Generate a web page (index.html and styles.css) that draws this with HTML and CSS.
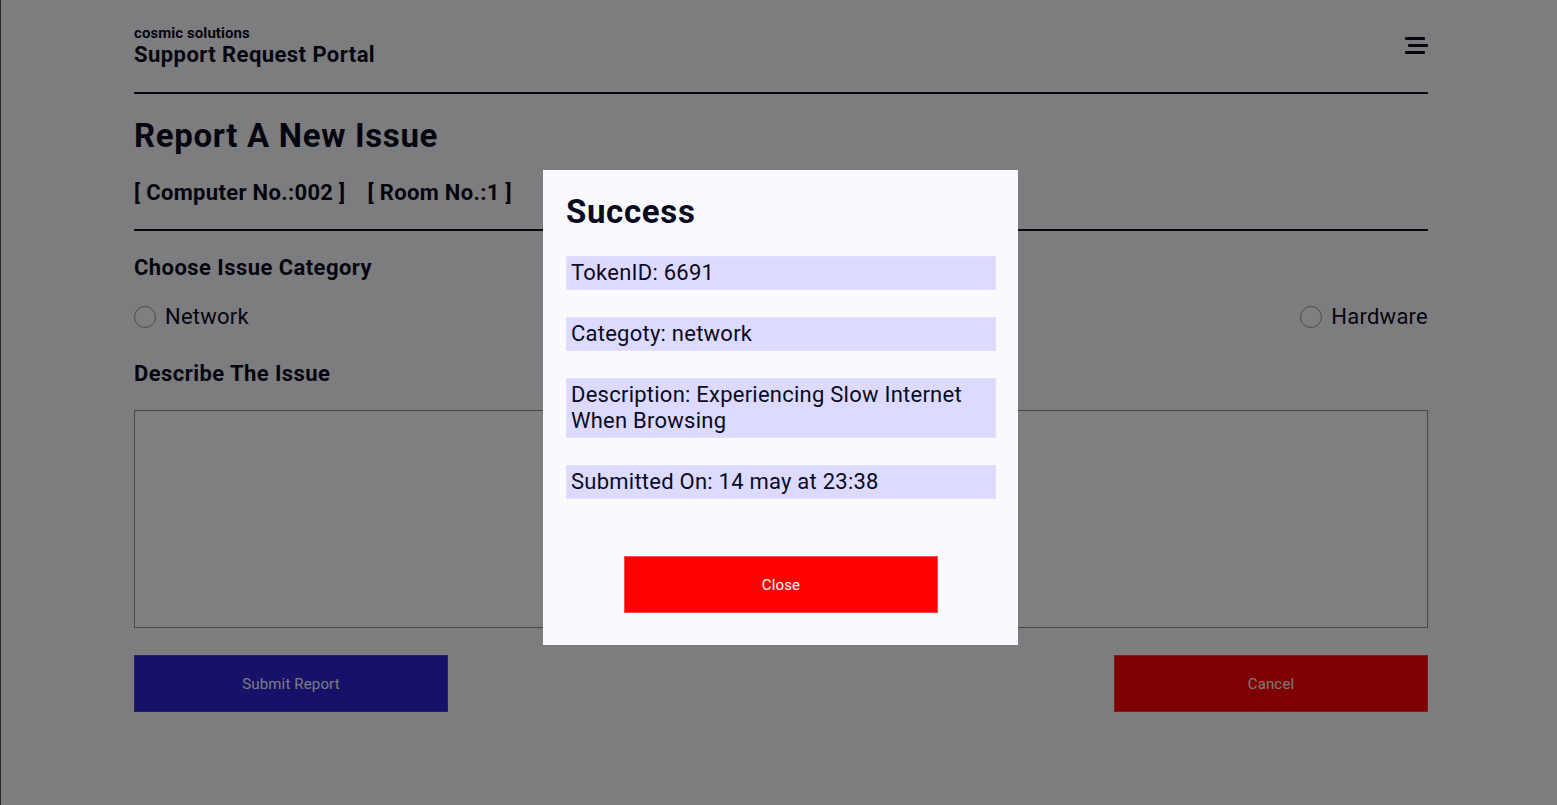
FILE: index.html
```html
<!DOCTYPE html>
<html lang="en">
<head>
<meta charset="utf-8">
<title>Support Request Portal</title>
<link rel="stylesheet" href="styles.css">
</head>
<body>
<div class="page">
  <header class="header">
    <div class="brand">
      <div class="company">cosmic solutions</div>
      <div class="portal">Support Request Portal</div>
    </div>
    <div class="menu" aria-label="menu">
      <span class="bar"></span>
      <span class="bar mid"></span>
      <span class="bar"></span>
    </div>
  </header>
  <hr class="rule">
  <h1 class="title">Report A New Issue</h1>
  <div class="meta"><span>[ Computer No.:002 ]</span><span>[ Room No.:1 ]</span></div>
  <hr class="rule">
  <h2 class="label">Choose Issue Category</h2>
  <div class="radios">
    <label class="radio"><span class="circle"></span>Network</label>
    <label class="radio"><span class="circle"></span>Hardware</label>
  </div>
  <h2 class="label describe">Describe The Issue</h2>
  <div class="textarea"></div>
  <div class="actions">
    <button class="btn submit">Submit Report</button>
    <button class="btn cancel">Cancel</button>
  </div>
</div>
<div class="overlay">
  <div class="modal">
    <h2 class="modal-title">Success</h2>
    <div class="info">TokenID: 6691</div>
    <div class="info">Categoty: network</div>
    <div class="info">Description: Experiencing Slow Internet When Browsing</div>
    <div class="info">Submitted On: 14 may at 23:38</div>
    <div class="modal-actions"><button class="btn close">Close</button></div>
  </div>
</div>
</body>
</html>
```

FILE: styles.css
```css
* { box-sizing: border-box; }
html, body { margin: 0; padding: 0; }
body {
  background: #fafafe;
  color: #0a0a1e;
  font-family: Roboto, "Liberation Sans", sans-serif;
  letter-spacing: 0.015em;
  border-left: 1px solid #555;
  min-height: 805px;
}
.page {
  width: 1294px;
  margin-left: 133px;
  padding-top: 25px;
}
.header {
  display: flex;
  justify-content: space-between;
  align-items: center;
}
.company { font-size: 15px; font-weight: 700; line-height: 16px; letter-spacing: 0.005em; }
.portal { font-size: 22px; font-weight: 700; line-height: 26px; margin-top: 1px; letter-spacing: 0.02em; }
.menu { width: 23px; display: flex; flex-direction: column; gap: 4px; margin-top: -3px; }
.bar { display: block; width: 20px; height: 3px; background: #0a0a1e; border-radius: 1px; }
.bar.mid { margin-left: 3px; }
.rule { border: 0; border-top: 2px solid #0a0a1e; margin: 24px 0 0; }
.title { font-size: 33px; font-weight: 700; line-height: 38px; margin: 23px 0 0; letter-spacing: 0.02em; }
.meta { font-size: 22px; font-weight: 700; line-height: 25px; margin: 25px 0 23px; display: flex; gap: 22px; letter-spacing: 0.015em; }
.meta + .rule { margin-top: 24px; }
.label { font-size: 22px; font-weight: 700; line-height: 25px; margin: 24px 0 0; letter-spacing: 0.02em; }
.radios { display: flex; justify-content: space-between; margin-top: 24px; }
.radio { display: flex; align-items: center; gap: 9px; font-size: 22px; line-height: 25px; }
.circle { width: 22px; height: 22px; border: 1.5px solid #979797; border-radius: 50%; background: #fff; }
.describe { margin-top: 32px; }
.textarea { height: 218px; border: 1px solid #8e8e8e; background: #fff; margin-top: 24px; }
.actions { display: flex; justify-content: space-between; margin-top: 27px; }
.btn {
  font-family: Roboto, "Liberation Sans", sans-serif;
  font-size: 15px;
  letter-spacing: 0.01em;
  width: 314px;
  height: 57px;
  border: 1px solid transparent;
  color: #f6f6ff;
  cursor: pointer;
}
.submit { background: #2f23d5; border-color: #4a40d8; }
.cancel { background: #ff0000; border-color: #ff3a3a; }
.overlay {
  position: fixed;
  inset: 0;
  background: rgba(0, 0, 0, 0.5);
  display: flex;
  justify-content: center;
  align-items: center;
  padding: 10px 0 0 4px;
}
.modal {
  width: 475px;
  height: 475px;
  background: #fafafe;
  padding: 23px 22px 32px 23px;
  display: flex;
  flex-direction: column;
}
.modal-title { font-size: 33px; font-weight: 700; line-height: 38px; margin: 0 0 25px 0; letter-spacing: 0.02em; }
.info {
  background: #dcdaff;
  border: 1px solid #e2e0ff;
  font-size: 22px;
  line-height: 26px;
  padding: 3px 4px;
  margin-bottom: 27px;
}
.modal-actions { margin-top: auto; display: flex; justify-content: center; }
.close { background: #ff0000; border-color: #ff4a4a; color: #fff; }
```
